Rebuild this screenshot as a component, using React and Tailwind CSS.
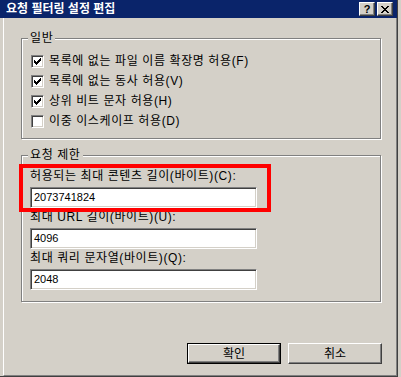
import React from 'react';

// Win2000-style dialog: 요청 필터링 설정 편집
const CHECK_PIXELS = [
  [6, 0, 1], [5, 1, 2], [0, 2, 1], [4, 2, 3], [0, 3, 2], [3, 3, 3], [0, 4, 5], [1, 5, 3], [2, 6, 1],
];

const Checkbox = ({ checked }) => (
  <span className="w-[13px] h-[13px] shrink-0 bg-white border border-t-[#808080] border-l-[#808080] border-b-white border-r-white shadow-[inset_1px_1px_0_#404040,inset_-1px_-1px_0_#d4d0c8] flex items-center justify-center">
    {checked && (
      <svg width="7" height="7" viewBox="0 0 7 7" shapeRendering="crispEdges">
        {CHECK_PIXELS.map(([x, y, w], i) => (
          <rect key={i} x={x} y={y} width={w} height="1" fill="#000" />
        ))}
      </svg>
    )}
  </span>
);

const CheckRow = ({ checked, label }) => (
  <div className="h-[20px] flex items-center gap-[5px]">
    <Checkbox checked={checked} />
    <span className="text-[12px] leading-[14px] tracking-[0.6px] text-black">{label}</span>
  </div>
);

const Field = ({ label, value, first }) => (
  <div className={first ? '' : 'mt-[2px]'}>
    <div className="h-[14px] text-[12px] leading-[14px] tracking-[0.6px] text-black">{label}</div>
    <div className="mt-[4px] w-[227px] h-[21px] bg-white border border-t-[#808080] border-l-[#808080] border-b-white border-r-white shadow-[inset_1px_1px_0_#404040,inset_-1px_-1px_0_#d4d0c8] flex items-center pl-[3px] text-[11px] text-black">
      {value}
    </div>
  </div>
);

const TitleButton = ({ children }) => (
  <div className="w-[16px] h-[14px] bg-[#d4d0c8] border border-t-white border-l-white border-b-[#404040] border-r-[#404040] shadow-[inset_-1px_-1px_0_#808080] flex items-center justify-center">
    {children}
  </div>
);

export default function App() {
  return (
    <div className="w-[401px] h-[377px] bg-[#d4d0c8] overflow-hidden font-['Liberation_Sans','Noto_Sans_CJK_KR',sans-serif]">
      <div className="w-[398px] h-[377px] flex flex-col border-r border-b border-r-[#404040] border-b-[#404040]">
        {/* title bar */}
        <div className="h-[18px] shrink-0 bg-[#0a246a] flex items-center pl-[6px] pr-[4px]">
          <span className="text-white font-bold text-[12px] leading-[14px]">요청 필터링 설정 편집</span>
          <div className="ml-auto flex items-center gap-[2px]">
            <TitleButton>
              <span className="text-[11px] leading-none font-bold text-black">?</span>
            </TitleButton>
            <TitleButton>
              <svg width="8" height="7" viewBox="0 0 8 7" shapeRendering="crispEdges">
                <path d="M0 0h2v1h1v1h2V1h1V0h2v1H7v1H6v1H5v1h1v1h1v1h1v1H6V6H5V5H3v1H2v1H0V6h1V5h1V4h1V3H2V2H1V1H0z" fill="#000" />
              </svg>
            </TitleButton>
          </div>
        </div>

        {/* body */}
        <div className="flex-1 flex flex-col ml-[3px] border-l border-l-white border-r border-r-[#808080] border-b border-b-[#808080]">
          <div className="relative mt-[20px] ml-[17px] w-[360px] h-[101px] border border-[#808080] shadow-[1px_1px_0_#fff,inset_1px_1px_0_#fff] pt-[12px] pl-[9px]">
            <span className="absolute left-[6px] top-[-8px] px-[2px] bg-[#d4d0c8] text-[12px] leading-[14px] tracking-[0.6px] text-black">일반</span>
            <CheckRow checked label="목록에 없는 파일 이름 확장명 허용(F)" />
            <CheckRow checked label="목록에 없는 동사 허용(V)" />
            <CheckRow checked label="상위 비트 문자 허용(H)" />
            <CheckRow label="이중 이스케이프 허용(D)" />
          </div>

          <div className="relative mt-[16px] ml-[17px] w-[360px] h-[147px] border border-[#808080] shadow-[1px_1px_0_#fff,inset_1px_1px_0_#fff] pt-[13px] pl-[8px]">
            <span className="absolute left-[6px] top-[-8px] px-[2px] bg-[#d4d0c8] text-[12px] leading-[14px] tracking-[0.6px] text-black">요청 제한</span>
            <Field first label="허용되는 최대 콘텐츠 길이(바이트)(C):" value="2073741824" />
            <Field label="최대 URL 길이(바이트)(U):" value="4096" />
            <Field label="최대 쿼리 문자열(바이트)(Q):" value="2048" />
            {/* red highlight */}
            <div className="absolute left-[-3px] top-[8px] w-[252px] h-[48px] border-4 border-[#ff0000]" />
          </div>

          <div className="mt-[41px] flex justify-end gap-[7px] pr-[14px]">
            <div className="w-[94px] h-[21px] border border-black">
              <div className="w-full h-full bg-[#d4d0c8] border border-t-white border-l-white border-b-[#404040] border-r-[#404040] shadow-[inset_-1px_-1px_0_#808080] flex items-center justify-center text-[12px] text-black">
                확인
              </div>
            </div>
            <div className="w-[94px] h-[21px] bg-[#d4d0c8] border border-t-white border-l-white border-b-[#404040] border-r-[#404040] shadow-[inset_-1px_-1px_0_#808080] flex items-center justify-center text-[12px] text-black">
              취소
            </div>
          </div>
        </div>
      </div>
    </div>
  );
}
